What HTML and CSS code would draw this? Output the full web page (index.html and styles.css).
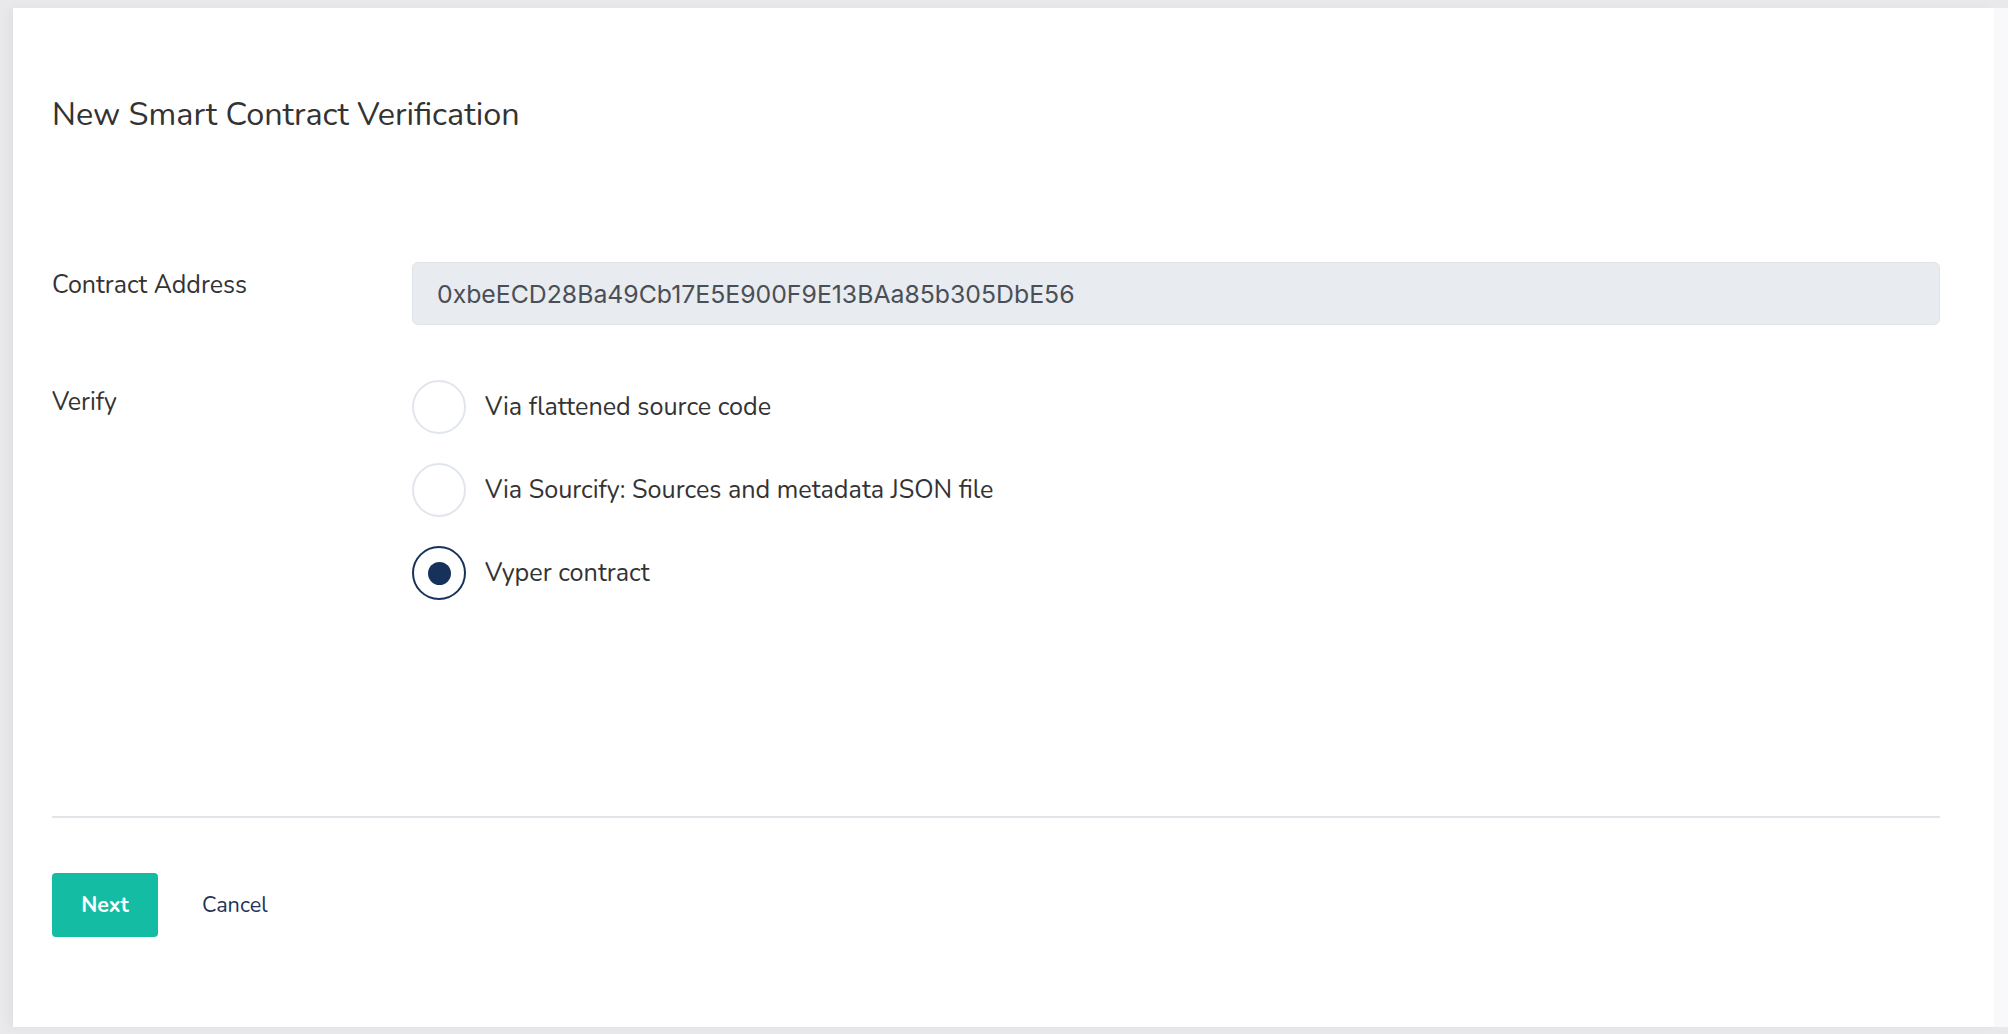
FILE: index.html
```html
<!DOCTYPE html>
<html lang="en">
<head>
<meta charset="utf-8">
<title>New Smart Contract Verification</title>
<link rel="stylesheet" href="styles.css">
</head>
<body>
<div class="frame">
  <main class="card">
    <h1 class="card-title">New Smart Contract Verification</h1>
    <form class="form">
      <div class="form-row address-row">
        <label class="form-label">Contract Address</label>
        <div class="form-field">
          <div class="address-input">0xbeECD28Ba49Cb17E5E900F9E13BAa85b305DbE56</div>
        </div>
      </div>
      <div class="form-row verify-row">
        <label class="form-label">Verify</label>
        <div class="form-field radios">
          <div class="radio-item"><span class="radio"></span><span class="radio-text">Via flattened source code</span></div>
          <div class="radio-item"><span class="radio"></span><span class="radio-text">Via Sourcify: Sources and metadata JSON file</span></div>
          <div class="radio-item"><span class="radio checked"></span><span class="radio-text">Vyper contract</span></div>
        </div>
      </div>
    </form>
    <div class="divider"></div>
    <div class="actions">
      <button class="btn-next" type="button">Next</button>
      <span class="btn-cancel">Cancel</span>
    </div>
  </main>
  <div class="track"></div>
</div>
</body>
</html>
```

FILE: styles.css
```css
* { box-sizing: border-box; }
html, body { margin: 0; padding: 0; }
body {
  width: 2008px;
  height: 1034px;
  overflow: hidden;
  background: #e9e9eb;
  font-family: "Nunito", "Lato", "Open Sans", sans-serif;
  color: #333333;
}
.frame {
  display: flex;
  height: 1034px;
  padding: 8px 0 7px 13px;
}
.card {
  flex: 1;
  background: #ffffff;
  padding: 0 54px 0 39px;
  box-shadow: -4px 0 10px rgba(0,0,0,0.04);
}
.track {
  width: 14px;
  background: #f9f9fb;
}
.card-title {
  margin: 0;
  padding-top: 82px;
  font-size: 32.4px;
  font-weight: 400;
  line-height: 48px;
  color: #333333;
}
.form { margin-top: 124px; }
.form-row { display: flex; }
.form-label {
  width: 360px;
  flex-shrink: 0;
  font-size: 25px;
  line-height: 30px;
  color: #333333;
}
.address-row .form-label { padding-top: 8px; }
.form-field { flex: 1; }
.address-input {
  height: 63px;
  background: #e8ebef;
  border: 1px solid #e0e4e8;
  border-radius: 6px;
  padding: 0 24px;
  display: flex;
  align-items: center;
  font-family: "Inter", "Roboto", sans-serif;
  font-size: 24.8px;
  color: #4a4f57;
}
.verify-row { margin-top: 55px; }
.verify-row .form-label { padding-top: 7px; }
.radios { display: flex; flex-direction: column; gap: 29px; }
.radio-item { display: flex; align-items: center; gap: 19px; }
.radio {
  width: 54px;
  height: 54px;
  border-radius: 50%;
  border: 2px solid #e1e5ec;
  background: #fff;
  display: flex;
  align-items: center;
  justify-content: center;
}
.radio.checked { border-color: #17325a; }
.radio.checked::after {
  content: "";
  width: 23px;
  height: 23px;
  border-radius: 50%;
  background: #17325a;
}
.radio-text { font-size: 25.2px; color: #333333; }
.divider {
  margin-top: 216px;
  height: 2px;
  background: #e1e5e9;
}
.actions {
  display: flex;
  align-items: center;
  margin-top: 55px;
  gap: 44px;
}
.btn-next {
  width: 106px;
  height: 64px;
  border: none;
  border-radius: 4px;
  background: #14bca3;
  color: #ffffff;
  font-family: "Nunito", "Lato", sans-serif;
  font-weight: 700;
  font-size: 21.5px;
}
.btn-cancel {
  font-size: 21.6px;
  color: #1d3358;
}
```
